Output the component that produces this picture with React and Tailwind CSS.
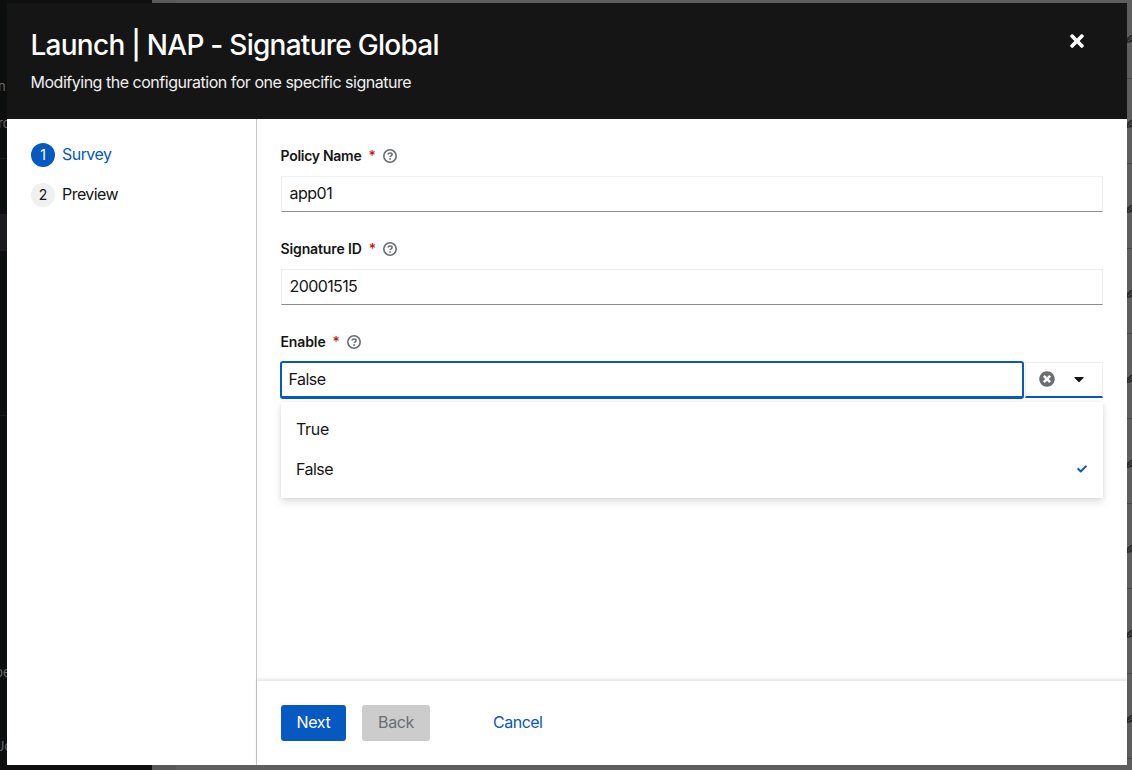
import React from "react";
import { FaTimes, FaTimesCircle, FaCaretDown, FaCheck } from "react-icons/fa";

const rows = [0, 1, 2, 3, 4, 5, 6, 7, 8];

function HelpIcon({ gap }) {
  return (
    <svg viewBox="0 0 14 14" className={`size-[14px] text-[#6a6e73] ${gap}`} fill="none" stroke="currentColor">
      <circle cx="7" cy="7" r="6.200" strokeWidth="1.600" />
      <path d="M4.900 5.500C5.200 4.400 6 4 7 4c1.200 0 2.100.7 2.100 1.600 0 1.300-1.900 1.200-1.900 2.500" strokeWidth="1.600" />
      <circle cx="7.100" cy="9.900" r=".95" fill="currentColor" stroke="none" />
    </svg>
  );
}

function Label({ text, track, starGap, iconGap }) {
  return (
    <div className="-ml-[0.5px] flex h-[21px] items-center">
      <span className={`text-[14px] leading-[21px] font-semibold text-[#151515] ${track}`}>{text}</span>
      <span className={`h-[21px] text-[14px] leading-[21px] font-medium text-[#c9190b] ${starGap}`}>*</span>
      <HelpIcon gap={iconGap} />
    </div>
  );
}

function TextField({ label, track, starGap, iconGap, value, valueTrack }) {
  return (
    <div className="flex flex-col gap-[10px]">
      <Label text={label} track={track} starGap={starGap} iconGap={iconGap} />
      <div className="flex h-9 items-center border border-[#f0f0f0] border-b-[#8a8d90] pr-2 pb-[2px] pl-[7.5px]">
        <span className={valueTrack}>{value}</span>
      </div>
    </div>
  );
}

function Backdrop() {
  return (
    <div className="absolute inset-0 flex overflow-hidden bg-[#5b5b5b] text-[13px] text-[#66686a]">
      <div className="relative w-[152px] shrink-0 bg-[#0d0f0f]">
        <div className="absolute top-[158px] h-px w-full bg-[#1b1d1d]" />
        <div className="absolute top-[214px] h-[37px] w-full bg-[#1c1c1f]" />
        <div className="absolute top-[415px] h-px w-full bg-[#1b1d1d]" />
        <span className="absolute -left-[2px] top-[74px]">n</span>
        <span className="absolute -left-[2px] top-[111px]">rd</span>
        <span className="absolute -left-[5px] top-[660px]">pe</span>
        <span className="absolute -left-[3px] top-[734px]">Jo</span>
      </div>
      <div className="w-6 shrink-0 bg-[#585858]" />
      <div className="flex grow flex-col bg-[#5e5e5e] pt-[33px]">
        {rows.map((r) => (
          <div key={r} className="flex h-[85px] shrink-0 flex-col items-end">
            <svg viewBox="0 0 10 10" className="-mr-[4px] h-[10px] w-[10px]" fill="none" stroke="#2b2b2b" strokeWidth="1.5">
              <path d="M9 0 2 5 1 9.200 5 8.500 10 4M2 5 5 8.500M4 4.500 7 6.500" />
            </svg>
            <div className="mt-[35px] h-px w-full bg-[#474747]" />
          </div>
        ))}
      </div>
    </div>
  );
}

export default function App() {
  return (
    <div className="relative h-[770px] w-[1132px] overflow-hidden font-['Inter',sans-serif] text-[16px] leading-6 text-[#151515]">
      <Backdrop />
      <div className="relative mx-auto flex h-full w-[1132px] flex-col pt-[3px] pr-[5px] pb-[5px] pl-[7px]">
        <header className="flex h-[116px] shrink-0 justify-between bg-[#151515] pr-[42px] pl-[23.5px] text-white">
          <div className="pt-[24px]">
            <h1 className="text-[28px] leading-[36px] font-medium tracking-[-0.74px] whitespace-nowrap">Launch | NAP - Signature Global</h1>
            <p className="mt-[7px] tracking-[-0.48px] whitespace-nowrap text-[#f0f0f0]">Modifying the configuration for one specific signature</p>
          </div>
          <button className="mt-[28px] h-5" aria-label="Close">
            <FaTimes className="size-[20px] -mr-[2px]" />
          </button>
        </header>
        <div className="flex min-h-0 grow bg-white">
          <nav className="flex w-[250px] shrink-0 flex-col gap-4 border-r border-[#c7c7c7] pt-6 pl-6">
            <div className="flex items-center gap-[7px]">
              <span className="flex size-6 items-center justify-center rounded-full bg-[#0659c0] text-[14px] text-white">1</span>
              <span className="pb-[2px] leading-[22px] tracking-[-0.55px] text-[#0659c0]">Survey</span>
            </div>
            <div className="flex items-center gap-[7px]">
              <span className="flex size-6 items-center justify-center rounded-full bg-[#f0f0f0] text-[14px]">2</span>
              <span className="pb-[2px] leading-[22px] tracking-[-0.55px]">Preview</span>
            </div>
          </nav>
          <div className="flex min-w-0 grow flex-col">
            <main className="flex grow flex-col gap-[26px] px-6 pt-[26px]">
              <TextField label="Policy Name" track="tracking-[-0.28px]" starGap="ml-[7px]" iconGap="ml-[7px]" value="app01" valueTrack="tracking-[-0.5px]" />
              <TextField label="Signature ID" track="tracking-[-0.12px]" starGap="ml-[7px]" iconGap="ml-[7px]" value="20001515" valueTrack="tracking-[-0.6px]" />
              <div className="flex flex-col gap-[10px]">
                <Label text="Enable" track="tracking-[-0.12px]" starGap="ml-[7px]" iconGap="ml-[7px]" />
                <div className="relative flex h-9">
                  <div className="-mt-px -ml-px flex h-[38px] w-[744px] items-center rounded-[3px] border-2 border-b-3 border-[#0659c0] px-[6.5px] pb-px">
                    <span className="tracking-[-0.55px]">False</span>
                  </div>
                  <div className="ml-px flex grow items-center border border-b-2 border-[#f0f0f0] border-b-[#0659c0] pb-px pl-[13px]">
                    <FaTimesCircle className="size-4 text-[#6a6e73]" />
                    <FaCaretDown className="ml-[16px] size-4" />
                  </div>
                  <div className="absolute top-[40px] left-0 flex h-24 w-full flex-col bg-white pt-[7px] shadow-[0_4px_8px_rgba(3,3,3,0.12),0_0_4px_rgba(3,3,3,0.06)]">
                    <div className="flex h-10 items-center pr-4 pl-[15px]">
                      <span className="tracking-[-0.3px]">True</span>
                    </div>
                    <div className="flex h-10 items-center justify-between pr-4 pl-[15px]">
                      <span className="tracking-[-0.55px]">False</span>
                      <FaCheck className="size-[10px] text-[#0659c0]" />
                    </div>
                  </div>
                </div>
              </div>
            </main>
            <footer className="flex h-[84px] shrink-0 items-center px-6 shadow-[0_-2px_3px_rgba(3,3,3,0.11)]">
              <button className="h-9 w-[65px] rounded-[3px] bg-[#0659c0] pb-[2px] tracking-[-0.3px] text-white">Next</button>
              <button className="ml-4 h-9 w-[68px] rounded-[3px] bg-[#cccccc] pb-[2px] tracking-[-0.4px] text-[#6a6e73]">Back</button>
              <button className="ml-[63px] pb-[2px] tracking-[-0.5px] text-[#0659c0]">Cancel</button>
            </footer>
          </div>
        </div>
      </div>
    </div>
  );
}
